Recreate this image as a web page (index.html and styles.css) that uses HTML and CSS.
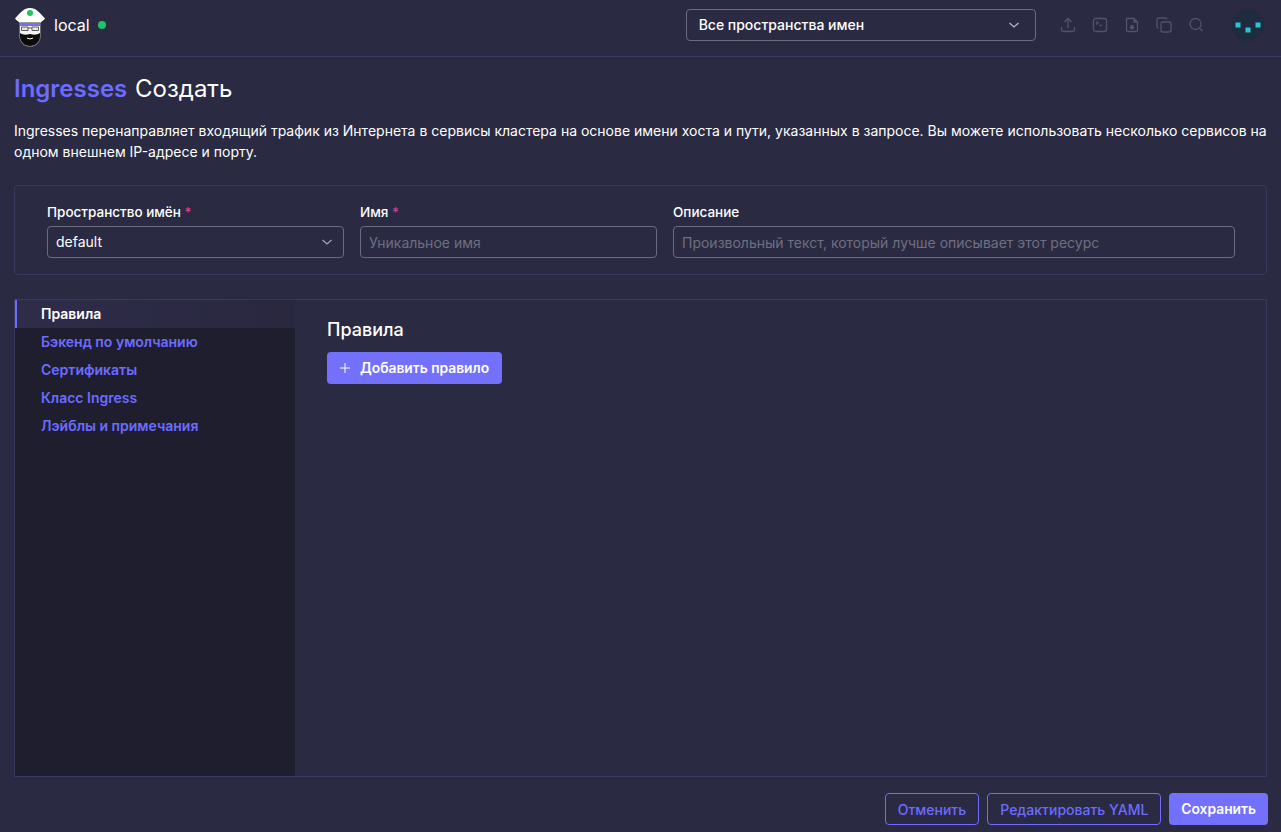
FILE: index.html
```html
<!DOCTYPE html>
<html lang="ru">
<head>
    <meta charset="UTF-8">
    <title>Ingresses</title>
    <link rel="stylesheet" href="styles.css">
</head>
<body>

    <header class="topbar">
        <svg class="logo" width="32" height="40" viewBox="0 0 32 40">
            <path d="M5.500 14 V28 C5.500 35 10 39.500 16 39.500 C22 39.500 26.500 35 26.500 28 V14 Z" fill="#f4f4f4" stroke="#6a6a6a" stroke-width="1"/>
            <path d="M6 26 C9 28 12 28 16 27 C20 28 23 28 26 26 V29 C26 35 21.500 39 16 39 C10.500 39 6 35 6 29 Z" fill="#0b0b0b"/>
            <path d="M13 31 Q16 33 19 31" stroke="#fff" stroke-width="1" fill="none"/>
            <rect x="6" y="14" width="20" height="5" fill="#7573e6"/>
            <path d="M7.500 20 h6.500 v3.500 h-6.500 Z M18 20 h6.500 v3.500 h-6.500 Z M14 21 h4" fill="#e8e8e8" stroke="#5c5c5c" stroke-width="1"/>
            <path d="M16 1 C10 1 6 6 1 11.500 C2 13.500 5 14.500 6 16 H26 C27 14.500 30 13.500 31 11.500 C26 6 22 1 16 1 Z" fill="#fff"/>
            <path d="M5.500 15.500 H26.500" stroke="#9a9a9a" stroke-width="1"/>
            <circle cx="16" cy="6" r="3" fill="#1fc565"/>
        </svg>
        <span class="cluster-name">local</span>
        <span class="status-dot"></span>

        <div class="ns-select">
            <span>Все пространства имен</span>
            <svg width="12" height="12" viewBox="0 0 12 12"><path d="M1.500 4 L6 8 L10.500 4" fill="none" stroke="#b6b6c2" stroke-width="1.300"/></svg>
        </div>

        <div class="tools">
            <svg width="16" height="16" viewBox="0 0 16 16"><path d="M8 11 V2 M4.500 5 L8 1.500 L11.500 5 M1.500 10 V13 Q1.500 14.500 3 14.500 H13 Q14.500 14.500 14.500 13 V10"/></svg>
            <svg width="16" height="16" viewBox="0 0 16 16"><rect x="1.500" y="1.500" width="13" height="13" rx="2"/><path d="M4 4.500 L6 6 L4 7.500 M7.500 8.500 H10"/></svg>
            <svg width="16" height="16" viewBox="0 0 16 16"><path d="M3 1.500 H10 L13.500 5 V13 Q13.500 14.500 12 14.500 H4 Q2.500 14.500 2.500 13 V2 Z M10 1.500 V5 H13.500"/><path class="fill" d="M6.500 8 H9.500 V10 H11 L8 13 L5 10 H6.500 Z"/></svg>
            <svg width="16" height="16" viewBox="0 0 16 16"><rect x="5" y="5" width="10" height="10" rx="2"/><path d="M11 2.500 Q11 1 9.500 1 H2.500 Q1 1 1 2.500 V9.500 Q1 11 2.500 11"/></svg>
            <svg width="16" height="16" viewBox="0 0 16 16"><circle cx="7.500" cy="7" r="5.500"/><path d="M11.500 11 L14.500 14"/></svg>
        </div>

        <div class="avatar">
            <svg width="32" height="32" viewBox="0 0 32 32">
                <circle cx="16" cy="16" r="16" fill="#1f2b3e"/>
                <rect x="3.500" y="13.500" width="5" height="5" fill="#2cc4dc"/>
                <rect x="13.500" y="18.500" width="5" height="5" fill="#2cc4dc"/>
                <rect x="23.500" y="13.500" width="5" height="5" fill="#2cc4dc"/>
            </svg>
        </div>
    </header>

    <main class="page">
        <h1 class="title"><span class="title-link">Ingresses</span> Создать</h1>
        <p class="intro">Ingresses перенаправляет входящий трафик из Интернета в сервисы кластера на основе имени хоста и пути, указанных в запросе. Вы можете использовать несколько сервисов на одном внешнем IP-адресе и порту.</p>

        <section class="meta-box">
            <div class="field field-ns">
                <label>Пространство имён <span class="req">*</span></label>
                <div class="input select">
                    <span>default</span>
                    <svg width="12" height="12" viewBox="0 0 12 12"><path d="M1.500 4 L6 8 L10.500 4" fill="none" stroke="#a3a3b0" stroke-width="1.300"/></svg>
                </div>
            </div>
            <div class="field field-name">
                <label>Имя <span class="req">*</span></label>
                <input class="input" type="text" placeholder="Уникальное имя">
            </div>
            <div class="field field-desc">
                <label>Описание</label>
                <input class="input" type="text" placeholder="Произвольный текст, который лучше описывает этот ресурс">
            </div>
        </section>

        <section class="tabs-box">
            <nav class="side-tabs">
                <a class="tab active">Правила</a>
                <a class="tab">Бэкенд по умолчанию</a>
                <a class="tab">Сертификаты</a>
                <a class="tab">Класс Ingress</a>
                <a class="tab">Лэйблы и примечания</a>
            </nav>
            <div class="tab-body">
                <h3>Правила</h3>
                <button type="button" class="btn btn-primary btn-add">
                    <svg width="10" height="10" viewBox="0 0 10 10"><path d="M5 0 V10 M0 5 H10" stroke="#fff" stroke-width="1"/></svg>
                    Добавить правило
                </button>
            </div>
        </section>

        <footer class="actions">
            <button type="button" class="btn btn-outline">Отменить</button>
            <button type="button" class="btn btn-outline">Редактировать YAML</button>
            <button type="button" class="btn btn-primary btn-save">Сохранить</button>
        </footer>
    </main>

</body>
</html>
```

FILE: styles.css
```css
* {
    margin: 0;
    padding: 0;
    box-sizing: border-box;
}

body {
    font-family: Inter, 'Noto Sans', sans-serif;
    font-size: 14px;
    width: 1281px;
    height: 832px;
    overflow: hidden;
    color: #fff;
    background-color: #2a2a42;
}

.topbar {
    display: flex;
    align-items: center;
    height: 57px;
    padding: 0 0 6px 14px;
    border-bottom: 1px solid #39385e;
}

.logo {
    margin-top: 3px;
}

.cluster-name {
    margin-left: 8px;
    font-size: 16px;
}

.status-dot {
    width: 8px;
    height: 8px;
    margin-left: 8px;
    border-radius: 50%;
    background-color: #1fc565;
}

.ns-select {
    display: flex;
    justify-content: space-between;
    align-items: center;
    width: 350px;
    height: 32px;
    margin-left: 580px;
    padding: 0 15px 1px 12px;
    border: 1px solid #6c6c7e;
    border-radius: 4px;
    font-weight: 500;
}

.tools {
    display: flex;
    gap: 16px;
    margin-left: 24px;
}

.tools svg {
    fill: none;
    stroke: #53536a;
    stroke-width: 1.300;
}

.tools .fill {
    fill: #53536a;
    stroke: none;
}

.avatar {
    height: 32px;
    margin-left: 28px;
}

.page {
    display: flex;
    flex-direction: column;
    height: 775px;
    padding: 0 14px 7px;
}

.title {
    margin-top: 16px;
    font-size: 24px;
    line-height: 32px;
    font-weight: 400;
}

.title-link {
    color: #6c6cff;
    font-weight: 600;
    margin-right: 1px;
}

.intro {
    margin-top: 15px;
    line-height: 21px;
}

.meta-box {
    display: flex;
    gap: 16px;
    height: 90px;
    margin-top: 23px;
    padding: 17px 31px 0 32px;
    border: 1px solid #39385e;
    border-radius: 4px;
}

.field label {
    display: block;
    height: 23px;
    line-height: 18px;
    font-size: 13.500px;
    font-weight: 500;
}

.req {
    color: #d63fa0;
}

.field-ns,
.field-name {
    width: 297px;
}

.field-desc {
    width: 562px;
}

.input {
    display: block;
    width: 100%;
    height: 32px;
    padding: 0 8px;
    border: 1px solid #6c6c7e;
    border-radius: 4px;
    background-color: transparent;
    color: #fff;
    font-family: inherit;
    font-size: 14px;
    outline: none;
}

.input::placeholder {
    color: #6f6f80;
}

.select {
    display: flex;
    justify-content: space-between;
    align-items: center;
    padding-right: 10px;
    padding-bottom: 1px;
}

.tabs-box {
    flex: 1;
    display: flex;
    margin-top: 24px;
    border: 1px solid #39385e;
}

.side-tabs {
    display: flex;
    flex-direction: column;
    width: 280px;
    background-color: #1f1e2f;
}

.tab {
    display: block;
    height: 28px;
    padding-left: 26px;
    line-height: 28px;
    color: #6c6cff;
    font-weight: 600;
    font-size: 14px;
}

.tab.active {
    padding-left: 24px;
    border-left: 2px solid #6c6cff;
    color: #fff;
    background: linear-gradient(90deg, #2e2c49, #29283f);
}

.tab-body {
    flex: 1;
    padding: 18px 32px;
}

.tab-body h3 {
    font-size: 18px;
    line-height: 24px;
    font-weight: 500;
    margin-bottom: 10px;
}

.btn {
    height: 32px;
    padding: 0 12px;
    border: 1px solid transparent;
    border-radius: 4px;
    font-family: inherit;
    font-size: 14px;
    font-weight: 600;
}

.btn-primary {
    background-color: #7371fc;
    color: #fff;
    font-size: 13.800px;
}

.btn-save {
    padding: 0 11px;
}

.btn-add {
    display: flex;
    align-items: center;
    gap: 10px;
}

.btn-outline {
    background-color: transparent;
    border-color: #6c6cff;
    color: #6c6cff;
    font-weight: 500;
}

.actions {
    display: flex;
    justify-content: flex-end;
    gap: 8px;
    margin-top: 16px;
    margin-right: -1px;
}
```
